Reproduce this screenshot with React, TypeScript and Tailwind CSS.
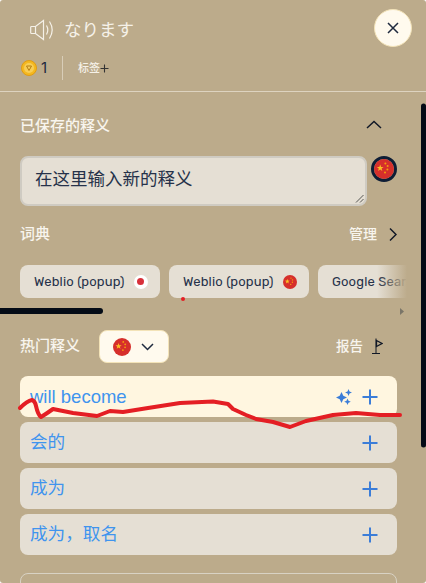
const cjk = "font-['Inter','Noto_Sans_CJK_SC',sans-serif]";

const Flag = ({ size = 18 }: { size?: number }) => (
  <svg width={size} height={size} viewBox="0 0 20 20" className="shrink-0">
    <circle cx="10" cy="10" r="10" fill="#d62f2b" />
    <path d="M6.200 5.600l.9 2.400 2.500.1-2 1.500.7 2.400-2.100-1.400-2.100 1.400.7-2.400-2-1.500 2.500-.1z" fill="#fbbf24" />
    <circle cx="11.400" cy="4.400" r="1" fill="#f59e0b" />
    <circle cx="13.600" cy="7" r="1" fill="#f59e0b" />
    <circle cx="13.400" cy="10.400" r="1" fill="#f59e0b" />
    <circle cx="11" cy="13.400" r="1" fill="#f59e0b" />
  </svg>
);

const Plus = () => (
  <svg width="18" height="18" viewBox="0 0 18 18" fill="none" stroke="#3b7dd8" strokeWidth="2" className="shrink-0">
    <path d="M9 1.500v15M1.500 9h15" />
  </svg>
);

const Chip = ({ label, children }: { label: string; children?: React.ReactNode }) => (
  <div className="flex h-[33px] w-[140px] shrink-0 items-center rounded-lg bg-[#e5dfd4] pl-[14px] text-[13px] tracking-[0.15px] text-[#26324a] font-['Rubik','Inter',sans-serif]">
    <span className="whitespace-nowrap">{label}</span>
    <span className="ml-[9px]">{children}</span>
  </div>
);

const Row = ({ text }: { text: string }) => (
  <div className="flex h-[41px] items-center justify-between rounded-lg bg-[#e5dfd4] pl-[10px] pr-[18px] text-[17.600px] text-[#3f94ee]">
    <span>{text}</span>
    <Plus />
  </div>
);

export default function App() {
  return (
    <div className={`relative h-[583px] w-[426px] overflow-hidden rounded-[3px] bg-[#bcab8b] ${cjk}`}>
      <header className="h-[92px] border-b border-[#ddd3c0]">
        <div className="flex h-[56px] items-start justify-between pl-[30px] pr-[14px] pt-[9px]">
          <div className="flex items-center gap-[9px] pt-[9px]">
            <svg width="25" height="24" viewBox="0 0 25 24" fill="none" stroke="#f5f1e8" strokeWidth="1.200">
              <path d="M1.500 8.500h4L13.500 2.500v19L5.500 15.500h-4a.8.8 0 0 1-.8-.8v-5.400a.8.8 0 0 1 .8-.8z" />
              <path d="M5.500 8.500v7" />
              <path d="M16.500 7.500c1.600 2.800 1.600 6.200 0 9" />
              <path d="M19.500 3.500c3.300 5.200 3.300 11.800 0 17" />
            </svg>
            <span className="text-[17.500px] leading-6 text-[#f5f1e8]">なります</span>
          </div>
          <button className="flex h-[38px] w-[38px] items-center justify-center rounded-full border border-[#f3e3b8] bg-[#fffaee]">
            <svg width="12" height="12" viewBox="0 0 12 12" fill="none" stroke="#1f2a3f" strokeWidth="1.500">
              <path d="M1 1l10 10M11 1L1 11" />
            </svg>
          </button>
        </div>
        <div className="flex h-[24px] items-center pl-[21px]">
          <svg width="16" height="16" viewBox="0 0 16 16">
            <circle cx="8" cy="8" r="7.500" fill="#f4b81f" stroke="#e09c12" />
            <circle cx="8" cy="8" r="5" fill="#f8cd55" />
            <path d="M5.500 6h5L8 10.500z" fill="none" stroke="#b57f12" strokeWidth="1" />
          </svg>
          <span className="ml-[4px] text-[15px] text-[#1f2a3f]">1</span>
          <span className="ml-[15px] h-[24px] w-px bg-[#d8cdb8]" />
          <span className="ml-[15px] text-[11px] font-medium text-[#f5f1e8]">标签</span>
          <svg width="9" height="9" viewBox="0 0 9 9" stroke="#333" strokeWidth="1.100" className="mt-[1px]">
            <path d="M4.500 0.500v8M0.500 4.500h8" />
          </svg>
        </div>
      </header>

      <section className="pl-[20px] pr-[29px] pt-[22px]">
        <div className="flex h-[22px] items-center justify-between">
          <h2 className="pt-[2px] text-[15px] font-medium text-[#f8f5ee]">已保存的释义</h2>
          <svg width="16" height="10" viewBox="0 0 16 10" fill="none" stroke="#111827" strokeWidth="1.500" className="mr-[15px]">
            <path d="M1 8l7-6.500L15 8" />
          </svg>
        </div>
        <div className="mt-[20px] flex items-start">
          <div className="relative h-[50px] w-[347px] rounded-lg border-2 border-[#cfcbc2] bg-[#e5dfd4] pl-[13px] pt-[7px] text-[17.500px] leading-[28px] text-[#26324a]">
            在这里输入新的释义
            <svg width="9" height="9" viewBox="0 0 9 9" stroke="#333" strokeWidth="0.800" className="absolute bottom-[1px] right-[1px]">
              <path d="M1 8.500L8.500 1M5 8.500L8.500 5" />
            </svg>
          </div>
          <div className="ml-[4px] rounded-full border-[3px] border-[#0e1d35]">
            <Flag size={20} />
          </div>
        </div>

        <div className="mt-[16px] flex h-[24px] items-center justify-between">
          <h2 className="text-[15px] font-medium text-[#f8f5ee]">词典</h2>
          <div className="flex items-center">
            <span className="pb-[2px] text-[14px] font-medium text-[#f8f5ee]">管理</span>
            <svg width="9" height="15" viewBox="0 0 9 15" fill="none" stroke="#111827" strokeWidth="1.500" className="ml-[11px]">
              <path d="M2 1.500L8 7.500L2 13.500" />
            </svg>
          </div>
        </div>

        <div className="relative mt-[19px] flex w-[387px] gap-[9px] overflow-hidden">
          <Chip label="Weblio (popup)">
            <span className="flex h-[14px] w-[14px] items-center justify-center rounded-full bg-white">
              <span className="h-[7px] w-[7px] rounded-full bg-[#d8303a]" />
            </span>
          </Chip>
          <Chip label="Weblio (popup)">
            <Flag size={14} />
          </Chip>
          <Chip label="Google Search" />
          <div className="absolute bottom-0 right-0 top-0 w-[30px] bg-gradient-to-r from-transparent to-[#bcab8b]" />
        </div>
        <div className="flex h-[32px] w-[387px] justify-end pr-[3px] pt-[10px]">
          <svg width="4" height="7" viewBox="0 0 4 7">
            <path d="M0 0l4 3.500L0 7z" fill="#7a7568" />
          </svg>
        </div>

        <div className="flex h-[33px] items-center justify-between">
          <div className="flex items-center">
            <h2 className="text-[15px] font-medium text-[#f8f5ee]">热门释义</h2>
            <button className="ml-[19px] flex h-[33px] w-[70px] items-center rounded-lg border border-[#f3e3b8] bg-[#fffaee] pl-[13px]">
              <Flag size={18} />
              <svg width="13" height="8" viewBox="0 0 13 8" fill="none" stroke="#1f2a3f" strokeWidth="1.500" className="ml-[10px]">
                <path d="M1 1l5.500 5.500L12 1" />
              </svg>
            </button>
          </div>
          <div className="flex items-center pr-[14px]">
            <span className="text-[13.500px] font-medium text-[#f8f5ee]">报告</span>
            <svg width="12" height="16" viewBox="0 0 12 16" fill="none" stroke="#111827" className="-mt-[2px] ml-[8px]">
              <path d="M1 15.500h8M5 15V0.500" />
              <path d="M5.500 2.500l5.500 3-5.500 3z" strokeWidth="1.300" />
            </svg>
          </div>
        </div>

        <div className="mt-[13px] flex flex-col gap-[5px]">
          <div className="flex h-[41px] items-center justify-between rounded-lg bg-[#fff6e0] pl-[10px] pr-[18px] text-[#3f94ee]">
            <span className="text-[18.500px] font-['Liberation_Sans',sans-serif]">will become</span>
            <div className="flex items-center gap-[9px]">
              <svg width="16" height="16" viewBox="0 0 16 16" fill="#3b7dd8">
                <path d="M5.500 3l1.800 3.700 3.700 1.800-3.700 1.800-1.800 3.700-1.800-3.700L0 8.500 3.700 6.700zM12.500 0l1 2.500 2.500 1-2.500 1-1 2.500-1-2.500-2.500-1 2.500-1zM11.500 9.500l1 2.300 2.300 1-2.300 1-1 2.200-1-2.200-2.300-1 2.300-1z" />
              </svg>
              <Plus />
            </div>
          </div>
          <Row text="会的" />
          <Row text="成为" />
          <Row text="成为，取名" />
        </div>

        <div className="mt-[18px] h-[40px] rounded-lg border border-[#d8d2c4]" />
      </section>

      {/* hand-drawn marks on top of the screenshot */}
      <svg width="426" height="583" viewBox="0 0 426 583" fill="none" className="pointer-events-none absolute left-0 top-0">
        <path
          d="M20 408Q27 401 32 400Q35 401 36 406Q38 415 41 417Q46 414 53 409L73 413L97 416L110 411L123 412L148 408L180 403L213 401.500L228 404L233 409L246 415L256 419L273 422L290 427L306 421L333 415L356 413L380 415L400 415"
          stroke="#e41e24"
          strokeWidth="4"
          strokeLinecap="round"
          strokeLinejoin="round"
        />
        <path d="M0 311H100" stroke="#040b16" strokeWidth="6" strokeLinecap="round" />
        <circle cx="183" cy="299" r="2" fill="#e41e24" />
        <path d="M423.500 106V445" stroke="#040b16" strokeWidth="5" strokeLinecap="round" />
      </svg>
    </div>
  );
}
